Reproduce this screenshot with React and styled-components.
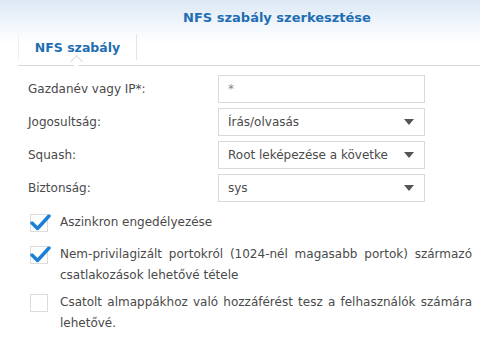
import React from "react";
import styled, { createGlobalStyle } from "styled-components";

const Global = createGlobalStyle`
  html, body {
    margin: 0;
    padding: 0;
    background: #fff;
  }
  body {
    font-family: "DejaVu Sans", Verdana, sans-serif;
    font-size: 12px;
    color: #4a4a4a;
  }
`;

const Window = styled.div`
  width: 480px;
  height: 338px;
  overflow: hidden;
  background: linear-gradient(to bottom, #dce9f5 0px, #f4f8fc 28px, #ffffff 44px);
`;

const Title = styled.div`
  height: 34px;
  padding-left: 74px;
  display: flex;
  align-items: center;
  justify-content: center;
  font-weight: bold;
  font-size: 13px;
  color: #1f6eb4;
`;

const TabBar = styled.div`
  position: relative;
  margin-left: 18px;
  height: 31px;
  display: flex;
  border-bottom: 1px solid #d6d9dc;
`;

const Tab = styled.div`
  position: relative;
  width: 117px;
  display: flex;
  align-items: center;
  justify-content: center;
  font-weight: bold;
  font-size: 12.5px;
  color: #1f6eb4;
  border-left: 1px solid #eef0f2;
  border-right: 1px solid #e2e4e6;
  margin-bottom: 5px;

  &::after {
    content: "";
    position: absolute;
    left: 53px;
    bottom: -6px;
    width: 8px;
    height: 8px;
    background: #fff;
    border-left: 1px solid #d6d9dc;
    border-top: 1px solid #d6d9dc;
    transform: rotate(45deg);
  }
`;

const Form = styled.div`
  padding: 9px 0 0 28px;
  display: flex;
  flex-direction: column;
  gap: 5px;
`;

const Row = styled.div`
  display: flex;
  align-items: center;
  height: 28px;
`;

const Label = styled.div`
  width: 190px;
`;

const Field = styled.div`
  box-sizing: content-box;
  width: 186px;
  height: 26px;
  border: 1px solid #d9d9d9;
  background: #fff;
  display: flex;
  align-items: center;
  justify-content: space-between;
  padding: 0 10px 0 9px;
  white-space: nowrap;
  overflow: hidden;
`;

const FieldText = styled.span`
  color: ${(p) => (p.$muted ? "#888" : "#4a4a4a")};
`;

const Arrow = styled.span`
  flex: none;
  width: 0;
  height: 0;
  margin-left: 6px;
  border-left: 5px solid transparent;
  border-right: 5px solid transparent;
  border-top: 6px solid #555;
`;

const Checks = styled.div`
  padding: 10px 8px 0 30px;
  display: flex;
  flex-direction: column;
`;

const CheckRow = styled.div`
  box-sizing: border-box;
  display: flex;
  align-items: flex-start;
  min-height: 32px;
  padding-bottom: 6px;
`;

const Box = styled.div`
  flex: none;
  width: 18px;
  height: 18px;
  border: 1px solid #dcdcdc;
  box-sizing: border-box;
  background: #fff;
  margin-right: 12px;
  margin-top: 2px;
  position: relative;
  svg {
    position: absolute;
    left: -1px;
    top: -2px;
  }
`;

const CheckText = styled.div`
  line-height: 21px;
  text-align: justify;
`;

function Tick() {
  return (
    <svg width="21" height="19" viewBox="0 0 21 19">
      <path d="M2 10 L7.5 15.5 L19 3" fill="none" stroke="#1a7fd6" strokeWidth="3.4" strokeLinecap="round" strokeLinejoin="round" />
    </svg>
  );
}

function Select({ value }) {
  return (
    <Field>
      <FieldText>{value}</FieldText>
      <Arrow />
    </Field>
  );
}

function Check({ checked, children }) {
  return (
    <CheckRow>
      <Box>{checked && <Tick />}</Box>
      <CheckText>{children}</CheckText>
    </CheckRow>
  );
}

export default function App() {
  return (
    <Window>
      <Global />
      <Title>NFS szabály szerkesztése</Title>
      <TabBar>
        <Tab>NFS szabály</Tab>
      </TabBar>
      <Form>
        <Row>
          <Label>Gazdanév vagy IP*:</Label>
          <Field>
            <FieldText $muted>*</FieldText>
          </Field>
        </Row>
        <Row>
          <Label>Jogosultság:</Label>
          <Select value="Írás/olvasás" />
        </Row>
        <Row>
          <Label>Squash:</Label>
          <Select value="Root leképezése a követke" />
        </Row>
        <Row>
          <Label>Biztonság:</Label>
          <Select value="sys" />
        </Row>
      </Form>
      <Checks>
        <Check checked>Aszinkron engedélyezése</Check>
        <Check checked>
          Nem-privilagizált portokról (1024-nél magasabb portok) származó csatlakozások lehetővé tétele
        </Check>
        <Check>
          Csatolt almappákhoz való hozzáférést tesz a felhasználók számára lehetővé.
        </Check>
      </Checks>
    </Window>
  );
}
